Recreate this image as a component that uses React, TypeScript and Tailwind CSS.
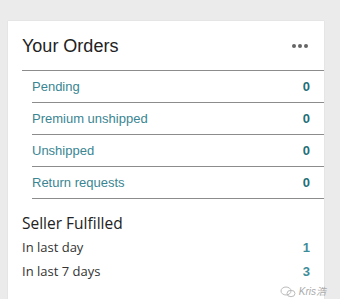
import React from "react";

const queue = [
  { label: "Pending", count: 0 },
  { label: "Premium unshipped", count: 0 },
  { label: "Unshipped", count: 0 },
  { label: "Return requests", count: 0 },
];

const fulfilled = [
  { label: "In last day", count: 1 },
  { label: "In last 7 days", count: 3 },
];

export default function App() {
  return (
    <div className="flex h-[299px] w-[340px] overflow-hidden bg-[#ebebeb]">
      <div className="ml-[8px] mt-[21px] flex h-[290px] w-[316px] flex-col bg-white pl-[14px] shadow-[0_0_1px_rgba(0,0,0,0.15)]">
        <div className="flex h-[50px] items-center justify-between border-b border-[#8c8c8c] pr-[14px] pt-[1px]">
          <span className="font-['Liberation_Sans',Arial,sans-serif] text-[18px] text-[#222]">Your Orders</span>
          <span className="flex gap-[2px] pr-[2px]">
            <span className="h-[4px] w-[4px] rounded-full bg-[#666]" />
            <span className="h-[4px] w-[4px] rounded-full bg-[#666]" />
            <span className="h-[4px] w-[4px] rounded-full bg-[#666]" />
          </span>
        </div>
        <div className="ml-[10px] flex flex-col">
          {queue.map((q) => (
            <div
              key={q.label}
              className="flex h-[32px] items-center justify-between border-b border-[#8c8c8c] pr-[14px] font-['Liberation_Sans',Arial,sans-serif] text-[13px]"
            >
              <span className="mt-[1px] text-[#3a8592]">{q.label}</span>
              <span className="mt-[1px] font-bold text-[#1f6f78]">{q.count}</span>
            </div>
          ))}
        </div>
        <div className="mt-[13px] font-['Open_Sans',sans-serif] text-[15.5px] text-[#222]">Seller Fulfilled</div>
        <div className="flex flex-col font-['Open_Sans',sans-serif] text-[13px]">
          {fulfilled.map((f) => (
            <div key={f.label} className="flex h-[24px] items-center justify-between pr-[14px]">
              <span className="text-[#333]">{f.label}</span>
              <span className="font-['Liberation_Sans',Arial,sans-serif] font-bold text-[#3f8c99]">{f.count}</span>
            </div>
          ))}
        </div>
        <div className="relative mt-[22px] border-b border-[#8c8c8c]">
          <div className="absolute bottom-[6px] right-[-2px] flex items-center gap-[3px] text-[#aaa]">
            <svg width="16" height="12" viewBox="0 0 16 12" fill="none" stroke="#bbb" strokeWidth="1">
              <ellipse cx="6" cy="5" rx="5" ry="4" />
              <ellipse cx="11" cy="7.5" rx="4" ry="3.2" />
            </svg>
            <span className="font-['Liberation_Sans',Arial,'Noto_Sans_CJK_SC',sans-serif] text-[10px] italic">Kris浩</span>
          </div>
        </div>
      </div>
    </div>
  );
}
